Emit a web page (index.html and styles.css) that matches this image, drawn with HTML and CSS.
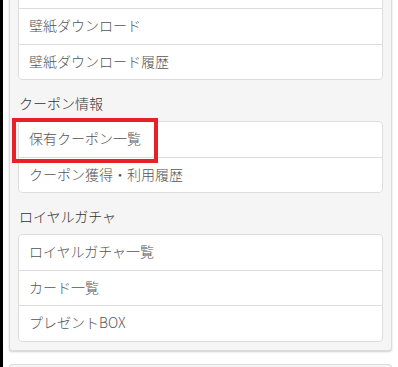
FILE: index.html
```html
<!DOCTYPE html>
<html lang="ja">

<head>
    <meta charset="UTF-8">
    <meta name="viewport" content="width=device-width, initial-scale=1.0">
    <title>マイページ</title>
    <link rel="stylesheet" href="styles.css">
</head>

<body>
    <div class="panel">
        <ul class="list-group">
            <li class="list-item list-item-cut"></li>
            <li class="list-item">壁紙ダウンロード</li>
            <li class="list-item">壁紙ダウンロード履歴</li>
        </ul>

        <h3 class="section-title">クーポン情報</h3>
        <ul class="list-group">
            <li class="list-item">
                保有クーポン一覧
                <span class="highlight"></span>
            </li>
            <li class="list-item">クーポン獲得・利用履歴</li>
        </ul>

        <h3 class="section-title">ロイヤルガチャ</h3>
        <ul class="list-group">
            <li class="list-item">ロイヤルガチャ一覧</li>
            <li class="list-item">カード一覧</li>
            <li class="list-item">プレゼントBOX</li>
        </ul>
    </div>

    <div class="panel next-panel"></div>
</body>

</html>
```

FILE: styles.css
```css
body {
    display: flow-root;
    margin: 0;
    min-height: 100vh;
    border-left: 3px solid #000;
    background-color: #fff;
    font-family: "Noto Sans CJK JP", "Noto Sans", sans-serif;
    font-size: 14px;
    font-weight: 300;
    color: #555;
}

.panel {
    margin: -36.5px 6px 0;
    padding: 8px;
    background-color: #f5f5f5;
    border: 1px solid #dcdcdc;
    border-radius: 3px;
    box-shadow: 0 1px 2px rgba(0, 0, 0, 0.2);
}

.next-panel {
    margin-top: 13px;
    height: 40px;
    box-shadow: none;
}

.list-group {
    list-style: none;
    margin: 0;
    padding: 0;
    background-color: #fff;
    border-radius: 4px;
}

.list-item {
    position: relative;
    padding: 7px 10px 9px;
    line-height: 18.5px;
    border: 1px solid #ddd;
    margin-bottom: -1px;
    background-color: #fff;
}

.list-item-cut {
    height: 18.5px;
}

.list-item:first-child {
    border-radius: 4px 4px 0 0;
}

.list-item:last-child {
    margin-bottom: 0;
    border-radius: 0 0 4px 4px;
}

.section-title {
    margin: 0;
    padding: 13px 1px 8px;
    font-size: 14px;
    font-weight: 300;
    line-height: 20px;
    color: #333;
}

.highlight {
    position: absolute;
    z-index: 1;
    left: -7px;
    top: -4px;
    width: 146px;
    height: 45px;
    box-sizing: border-box;
    border: 4px solid #e8202a;
}
```
